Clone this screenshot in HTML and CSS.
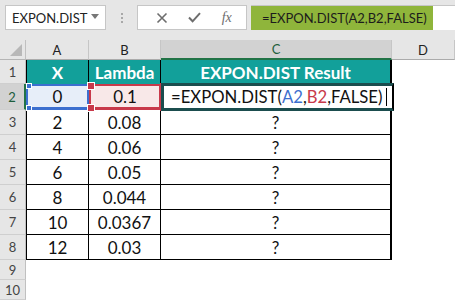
FILE: index.html
```html
<!DOCTYPE html>
<html lang="en">
<head>
  <meta charset="UTF-8">
  <title>EXPON.DIST</title>
  <link rel="stylesheet" href="styles.css">
</head>
<body>
  <!-- 公式栏 -->
  <div class="toolbar">
    <div class="namebox">
      <span>EXPON.DIST</span>
      <svg class="caret" width="8" height="5" viewBox="0 0 8 5"><path d="M0 0h8L4 5z" fill="#777"/></svg>
    </div>
    <div class="grip"><i></i><i></i><i></i></div>
    <div class="fxbox">
      <svg width="12" height="12" viewBox="0 0 12 12"><path d="M1.5 1.5l9 9M10.5 1.5l-9 9" stroke="#6d6d6d" stroke-width="1.6"/></svg>
      <svg width="13" height="11" viewBox="0 0 13 11"><path d="M1 5.5l3.6 3.8L12 1.2" stroke="#6d6d6d" stroke-width="2" fill="none"/></svg>
      <span class="fx">fx</span>
    </div>
    <div class="formula"><span class="fhl">=EXPON.DIST(A2,B2,FALSE)</span></div>
  </div>

  <!-- 表格 -->
  <div class="sheet">
    <div class="corner"><span class="tri"></span></div>
    <div class="colh">A</div>
    <div class="colh">B</div>
    <div class="colh sel">C</div>
    <div class="colh">D</div>

    <div class="rowh">1</div>
    <div class="th first">X</div>
    <div class="th">Lambda</div>
    <div class="th">EXPON.DIST Result</div>
    <div class="blank"></div>

    <div class="rowh sel">2</div>
    <div class="td first ref-a">0</div>
    <div class="td ref-b">0.1</div>
    <div class="td active">=EXPON.DIST(<span class="ca">A2</span>,<span class="cb">B2</span>,FALSE)<span class="cursor"></span></div>
    <div class="blank"></div>

    <div class="rowh">3</div>
    <div class="td first">2</div>
    <div class="td">0.08</div>
    <div class="td">?</div>
    <div class="blank"></div>

    <div class="rowh">4</div>
    <div class="td first">4</div>
    <div class="td">0.06</div>
    <div class="td">?</div>
    <div class="blank"></div>

    <div class="rowh">5</div>
    <div class="td first">6</div>
    <div class="td">0.05</div>
    <div class="td">?</div>
    <div class="blank"></div>

    <div class="rowh">6</div>
    <div class="td first">8</div>
    <div class="td">0.044</div>
    <div class="td">?</div>
    <div class="blank"></div>

    <div class="rowh">7</div>
    <div class="td first">10</div>
    <div class="td">0.0367</div>
    <div class="td">?</div>
    <div class="blank"></div>

    <div class="rowh">8</div>
    <div class="td first">12</div>
    <div class="td">0.03</div>
    <div class="td">?</div>
    <div class="blank"></div>

    <div class="rowh">9</div>
    <div class="blank wide"></div>

    <div class="rowh">10</div>
    <div class="blank wide"></div>
  </div>
</body>
</html>
```

FILE: styles.css
```css
/* 基础 */
*{
  box-sizing:border-box;
}
body{
  margin:0;
  font-family:Lato,"Open Sans",sans-serif;
  background:#fff;
  width:455px;
  height:303px;
  overflow:hidden;
}

/* 公式栏 */
.toolbar{
  height:40px;
  background:#e6e6e6;
  display:flex;
  align-items:flex-start;
  padding:5px 0 0 5px;
}
.namebox{
  width:101px;
  height:25px;
  background:#fff;
  border:1px solid #c6c6c6;
  display:flex;
  align-items:center;
  justify-content:space-between;
  padding:0 6px 0 6px;
  font-size:13px;
  color:#222;
}
.caret{
  margin-bottom:2px;
}
.grip{
  width:31px;
  height:25px;
  display:flex;
  flex-direction:column;
  align-items:center;
  justify-content:center;
  gap:2px;
}
.grip i{
  width:2px;
  height:2px;
  background:#a8a8a8;
}
.fxbox{
  width:110px;
  height:25px;
  background:#fff;
  border:1px solid #c6c6c6;
  display:flex;
  align-items:center;
  justify-content:space-around;
  padding:0 4px 0 8px;
}
.fx{
  font-family:"Liberation Serif",serif;
  font-style:italic;
  font-size:14px;
  color:#6d6d6d;
}
.formula{
  flex:1;
  height:25px;
  margin-left:4px;
  background:#fff;
  border-top:1px solid #c6c6c6;
  display:flex;
}
.fhl{
  width:182px;
  height:24px;
  background:#8fb53b;
  color:#1c1c1c;
  font-size:13px;
  line-height:24px;
  padding-left:11px;
  white-space:nowrap;
}

/* 表格 */
.sheet{
  display:grid;
  grid-template-columns:26px 63px 72px 231px 1fr;
  grid-template-rows:20px 24px 26px repeat(6,25px) 20px 20px;
}
.corner{
  background:#e6e6e6;
  border-right:1px solid #c0c0c0;
  border-bottom:1px solid #b5b5b5;
  position:relative;
}
.tri{
  position:absolute;
  right:3px;
  bottom:3px;
  width:0;
  height:0;
  border-left:12px solid transparent;
  border-bottom:12px solid #b8b8b8;
}
.colh{
  background:#e6e6e6;
  border-right:1px solid #c6c6c6;
  border-bottom:1px solid #ababab;
  display:flex;
  align-items:center;
  justify-content:center;
  font-size:13px;
  color:#222;
}
.colh.sel{
  background:#d2d2d2;
  border-bottom:2px solid #217346;
  color:#1d5d3b;
}
.rowh{
  background:#e6e6e6;
  border-right:1px solid #c0c0c0;
  border-bottom:1px solid #cfcfcf;
  display:flex;
  align-items:center;
  justify-content:center;
  font-size:13px;
  color:#444;
}
.rowh.sel{
  background:#d2d2d2;
  border-right:2px solid #217346;
  color:#1d5d3b;
}
.th{
  background:#12a09a;
  color:#fff;
  font-weight:bold;
  font-size:17px;
  display:flex;
  align-items:center;
  justify-content:center;
  border-right:1px solid #000;
}
.th:nth-child(9){
  border-right:2px solid #000;
}
.td{
  display:flex;
  align-items:center;
  justify-content:center;
  font-size:17px;
  color:#111;
  border-right:1px solid #000;
  border-bottom:1px solid #000;
}
.td:nth-child(5n+4){
  border-right:2px solid #000;
}
.first{
  border-left:1px solid #000;
}
.blank{
  background:#fff;
}
.wide{
  grid-column:2 / 6;
}

/* 引用高亮 */
.ref-a{
  background:#e7eef9;
  border:2px solid #3c6fcf;
  border-bottom-width:3px;
  position:relative;
}
.ref-b{
  background:#f8e8e8;
  border:2px solid #c8394a;
  border-bottom-width:3px;
  position:relative;
}
.ref-b::before,
.ref-b::after{
  content:"";
  position:absolute;
  width:6px;
  height:6px;
  background:#c8394a;
  border:1px solid #fff;
}
.ref-b::before{
  left:-4px;
  top:-4px;
  box-shadow:72px 0 0 -1px #c8394a;
}
.ref-b::after{
  left:-4px;
  bottom:-5px;
  box-shadow:72px 0 0 -1px #c8394a;
}
.ref-a::before,
.ref-a::after{
  content:"";
  position:absolute;
  left:-2px;
  width:4px;
  height:4px;
  background:#3c6fcf;
  border:1px solid #fff;
}
.ref-a::before{
  top:-3px;
}
.ref-a::after{
  bottom:-4px;
}
.active{
  justify-content:flex-start;
  padding-left:7px;
  font-size:16.7px;
  white-space:nowrap;
  border:3px solid #1b4d4e;
  margin:-1px -2px -1px 0;
  position:relative;
  z-index:1;
  background:#fff;
}
.ca{
  color:#3c6fcf;
}
.cb{
  color:#c8394a;
}
.cursor{
  display:inline-block;
  width:1px;
  height:18px;
  background:#000;
  margin-left:4px;
}
```
